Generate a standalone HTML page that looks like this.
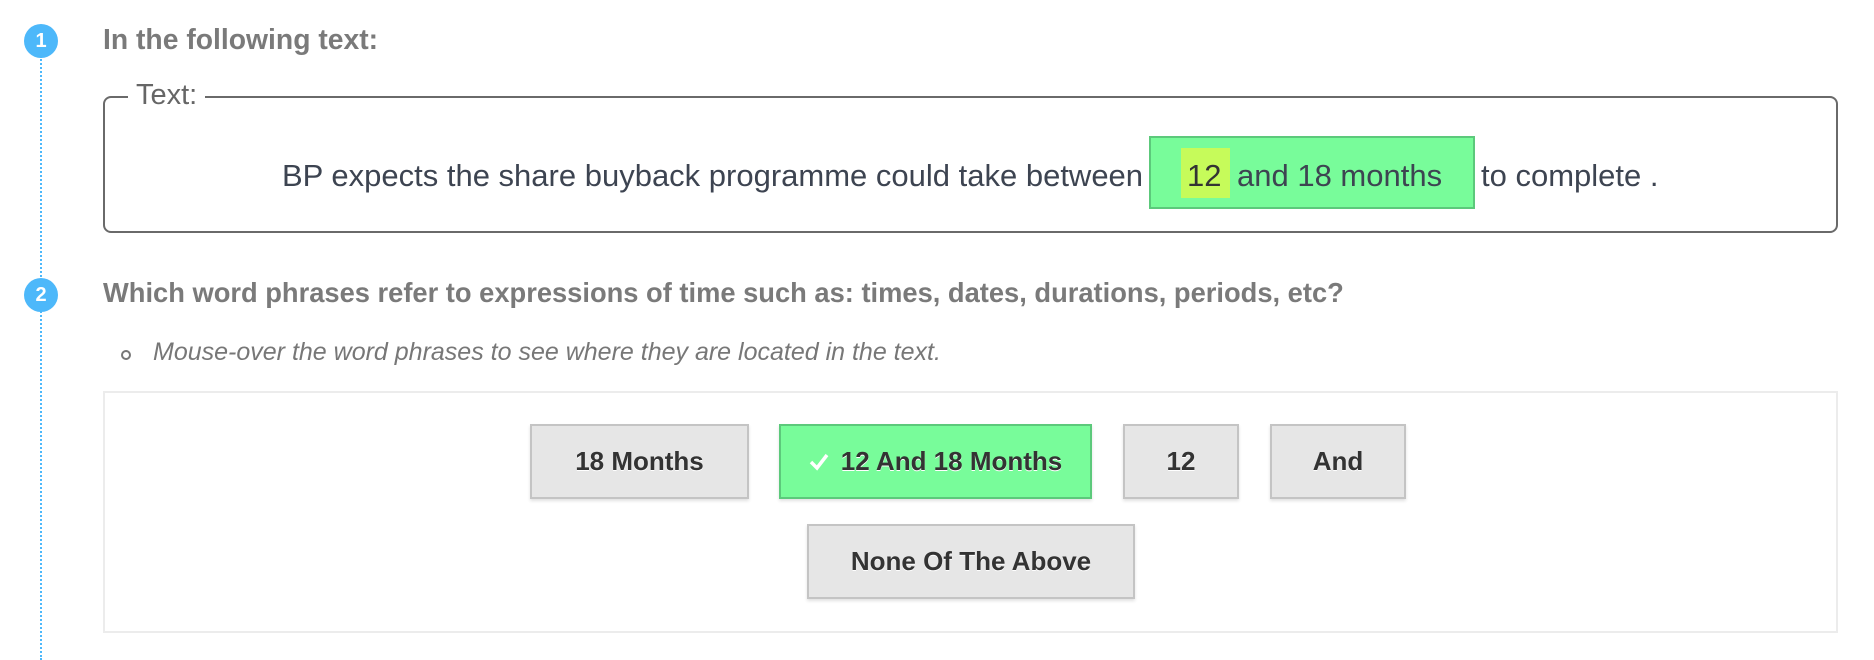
<!DOCTYPE html>
<html><head><meta charset="utf-8"><style>
body{margin:0;width:1874px;height:660px;background:#fff;position:relative;overflow:hidden;font-family:"Liberation Sans",sans-serif}
.a{position:absolute;white-space:nowrap}
.circ{position:absolute;width:34px;height:34px;border-radius:50%;background:#4db8fa;color:#fff;font-weight:bold;font-size:20px;text-align:center;line-height:34px}
.dot{position:absolute;left:40px;border-left:2px dotted #4db8fa;width:0}
.t{font-weight:bold;color:#7a7a7a;font-size:28.3px}
.btn{position:absolute;box-sizing:border-box;border:2px solid #c4c4c4;background:#e6e6e6;box-shadow:0 2px 3px rgba(0,0,0,.12);font-weight:bold;font-size:26px;color:#333;text-shadow:0 1px 0 #fff;display:flex;align-items:center;justify-content:center}
.s{font-size:31px;color:#3d4451}
</style></head><body>
<div class="dot" style="top:56px;height:604px"></div>
<div class="circ" style="left:24px;top:24px">1</div>
<div class="circ" style="left:24px;top:278px">2</div>
<div class="a t" style="left:103px;top:23px">In the following text:</div>
<div class="a" style="left:103px;top:96px;width:1735px;height:137px;box-sizing:border-box;border:2px solid #6a6a6a;border-radius:8px"></div>
<div class="a" style="left:128px;top:79px;background:#fff;padding:0 8px;font-size:29px;color:#666">Text:</div>
<div class="a s" style="left:282px;top:158px">BP expects the share buyback programme could take between</div>
<div class="a" style="left:1149px;top:136px;width:326px;height:73px;box-sizing:border-box;background:#78fc9a;border:2px solid #5cc97b"></div>
<div class="a" style="left:1181px;top:148px;width:49px;height:50px;background:#c6fb5a"></div>
<div class="a s" style="left:1187px;top:158px;color:#333">12</div>
<div class="a s" style="left:1237px;top:158px">and 18 months</div>
<div class="a s" style="left:1481px;top:158px">to complete .</div>
<div class="a t" style="left:103px;top:277px;font-size:27.3px">Which word phrases refer to expressions of time such as: times, dates, durations, periods, etc?</div>
<div class="a" style="left:121px;top:350px;width:6px;height:6px;border:2px solid #777;border-radius:50%"></div>
<div class="a" style="left:153px;top:338px;font-size:25px;font-style:italic;color:#777">Mouse-over the word phrases to see where they are located in the text.</div>
<div class="a" style="left:103px;top:391px;width:1735px;height:242px;box-sizing:border-box;border:2px solid #ececec"></div>
<div class="btn" style="left:530px;top:424px;width:219px;height:75px">18 Months</div>
<div class="btn" style="left:779px;top:424px;width:313px;height:75px;background:#78fc9a;border-color:#5cc97b"><svg width="20" height="18" viewBox="0 0 20 18" style="margin-right:12px"><polyline points="2,9 8,15 18,2" fill="none" stroke="#fff" stroke-width="3.5"/></svg>12 And 18 Months</div>
<div class="btn" style="left:1123px;top:424px;width:116px;height:75px">12</div>
<div class="btn" style="left:1270px;top:424px;width:136px;height:75px">And</div>
<div class="btn" style="left:807px;top:524px;width:328px;height:75px">None Of The Above</div>
</body></html>
